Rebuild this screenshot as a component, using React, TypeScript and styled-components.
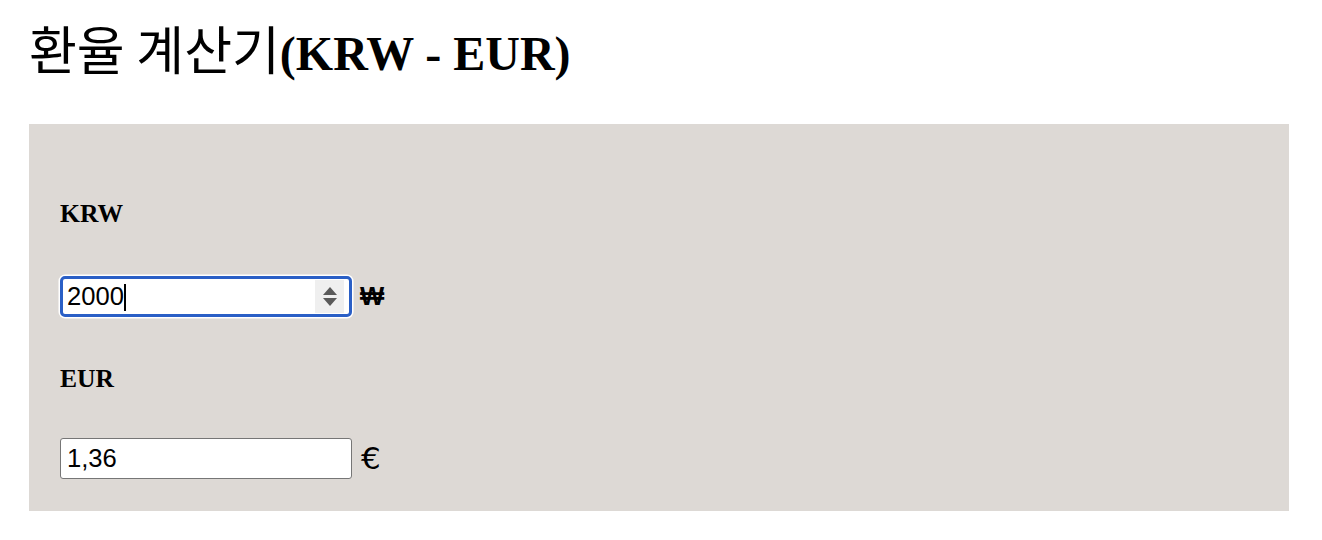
import React from "react";
import styled, { createGlobalStyle } from "styled-components";

const Global = createGlobalStyle`
  html, body { margin: 0; padding: 0; background: #ffffff; }
  body { font-family: "Liberation Serif", "Noto Sans CJK KR", serif; color: #000; }
`;

const Page = styled.div`
  padding: 27px 33px 30px 29px;
`;

const Title = styled.h1`
  margin: 0;
  font-family: "Liberation Serif", "Noto Sans CJK KR", serif;
  font-size: 48px;
  line-height: 54px;
  font-weight: 700;
  white-space: nowrap;
`;

const Hangul = styled.span`
  font-family: "Noto Sans CJK KR", sans-serif;
  font-weight: 400;
  font-size: 52px;
  line-height: 0;
`;

const Panel = styled.form`
  margin-top: 43px;
  background: #ddd9d5;
  padding: 75px 31px 32px;
  display: flex;
  flex-direction: column;
`;

const Label = styled.label<{ $gap: number }>`
  font-family: "Liberation Serif", serif;
  font-weight: 700;
  font-size: 25.6px;
  line-height: 29px;
  margin-bottom: ${(p) => p.$gap}px;
`;

const Row = styled.div<{ $after?: number }>`
  display: flex;
  align-items: center;
  gap: 8px;
  margin-bottom: ${(p) => p.$after ?? 0}px;
`;

const Field = styled.div`
  position: relative;
  width: 292px;
  height: 41px;
`;

const Input = styled.input<{ $focused?: boolean }>`
  box-sizing: border-box;
  width: 100%;
  height: 100%;
  margin: 0;
  font-family: "Liberation Sans", Arial, sans-serif;
  font-size: 25.6px;
  color: #000;
  background: #fff;
  border: ${(p) => (p.$focused ? "3px solid #2a5fc6" : "1px solid #767676")};
  border-radius: ${(p) => (p.$focused ? "5px" : "3px")};
  padding: 0 ${(p) => (p.$focused ? "4px" : "6px")};
  box-shadow: ${(p) => (p.$focused ? "0 0 0 1.5px #ffffff" : "none")};
  outline: none;
  appearance: textfield;
  -moz-appearance: textfield;
  caret-color: transparent;
  &::-webkit-outer-spin-button,
  &::-webkit-inner-spin-button {
    -webkit-appearance: none;
    margin: 0;
  }
`;

const Caret = styled.span`
  position: absolute;
  left: 64px;
  top: 8px;
  width: 2px;
  height: 27px;
  background: #000;
`;

const Spinner = styled.div`
  position: absolute;
  right: 8px;
  top: 4px;
  bottom: 4px;
  width: 29px;
  background: #efefef;
  display: flex;
  flex-direction: column;
  align-items: center;
  justify-content: center;
  gap: 3px;
`;

const Currency = styled.span<{ $size: number; $bold?: boolean; $font?: string; $shift?: number }>`
  font-family: ${(p) => p.$font ?? '"Liberation Sans"'}, Arial, sans-serif;
  font-size: ${(p) => p.$size}px;
  font-weight: ${(p) => (p.$bold ? 700 : 400)};
  line-height: 29px;
  margin-left: ${(p) => p.$shift ?? 0}px;
`;

const Arrow = ({ down }: { down?: boolean }) => (
  <svg width="14" height="8" viewBox="0 0 14 8" aria-hidden="true">
    {down ? (
      <polygon points="0,0 14,0 7,8" fill="#5a5a5a" />
    ) : (
      <polygon points="7,0 14,8 0,8" fill="#5a5a5a" />
    )}
  </svg>
);

export default function App() {
  return (
    <Page>
      <Global />
      <Title>
        <Hangul>환율 계산기</Hangul>(KRW - EUR)
      </Title>
      <Panel onSubmit={(e) => e.preventDefault()}>
        <Label htmlFor="krw" $gap={48}>KRW</Label>
        <Row $after={47}>
          <Field>
            <Input id="krw" type="number" defaultValue="2000" $focused />
            <Caret />
            <Spinner>
              <Arrow />
              <Arrow down />
            </Spinner>
          </Field>
          <Currency $size={25.6} $bold>₩</Currency>
        </Row>
        <Label htmlFor="eur" $gap={45}>EUR</Label>
        <Row>
          <Field>
            <Input id="eur" type="text" defaultValue="1,36" readOnly />
          </Field>
          <Currency $size={31} $font='"DejaVu Sans"' $shift={1}>€</Currency>
        </Row>
      </Panel>
    </Page>
  );
}
